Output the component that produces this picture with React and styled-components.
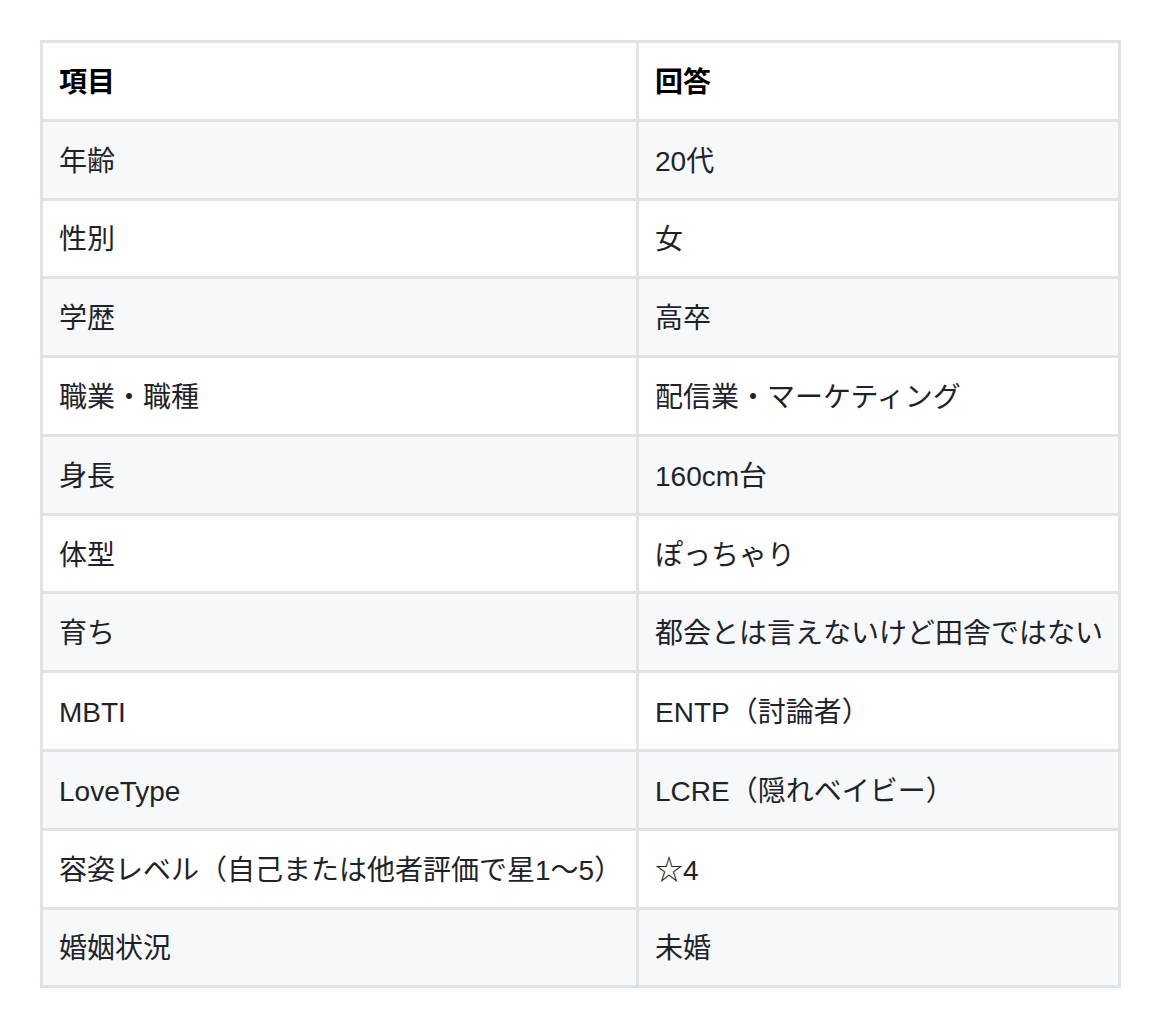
import React from "react";
import styled, { createGlobalStyle } from "styled-components";

const GlobalStyle = createGlobalStyle`
  body {
    margin: 0;
    padding: 40px;
    background: #fff;
    font-family: "Liberation Sans", "Noto Sans CJK JP", sans-serif;
    color: #1f2328;
  }
`;

const Table = styled.table`
  width: 1078px;
  border-collapse: collapse;
  table-layout: fixed;
  font-size: 28px;
  line-height: 42px;
`;

const Row = styled.tr`
  background: ${p => (p.$striped ? "#f6f8fa" : "#fff")};
`;

const HeadCell = styled.th`
  text-align: left;
  font-weight: 700;
  color: #000;
  padding: 18.9px 16px 14.9px;
  border: 3px solid #e0e3e6;
`;

const Cell = styled.td`
  padding: 18.9px 16px 14.9px;
  border: 3px solid #e0e3e6;
  white-space: nowrap;
`;

const rows = [
  ["年齢", "20代"],
  ["性別", "女"],
  ["学歴", "高卒"],
  ["職業・職種", "配信業・マーケティング"],
  ["身長", "160cm台"],
  ["体型", "ぽっちゃり"],
  ["育ち", "都会とは言えないけど田舎ではない"],
  ["MBTI", "ENTP（討論者）"],
  ["LoveType", "LCRE（隠れベイビー）"],
  ["容姿レベル（自己または他者評価で星1〜5）", "☆4"],
  ["婚姻状況", "未婚"],
];

const App = () => (
  <>
    <GlobalStyle />
    <Table>
      <colgroup>
        <col style={{ width: "596px" }} />
        <col style={{ width: "482px" }} />
      </colgroup>
      <thead>
        <Row>
          <HeadCell>項目</HeadCell>
          <HeadCell>回答</HeadCell>
        </Row>
      </thead>
      <tbody>
        {rows.map(([item, answer], i) => (
          <Row key={item} $striped={i % 2 === 0}>
            <Cell>{item}</Cell>
            <Cell>{answer}</Cell>
          </Row>
        ))}
      </tbody>
    </Table>
  </>
);

export default App;
